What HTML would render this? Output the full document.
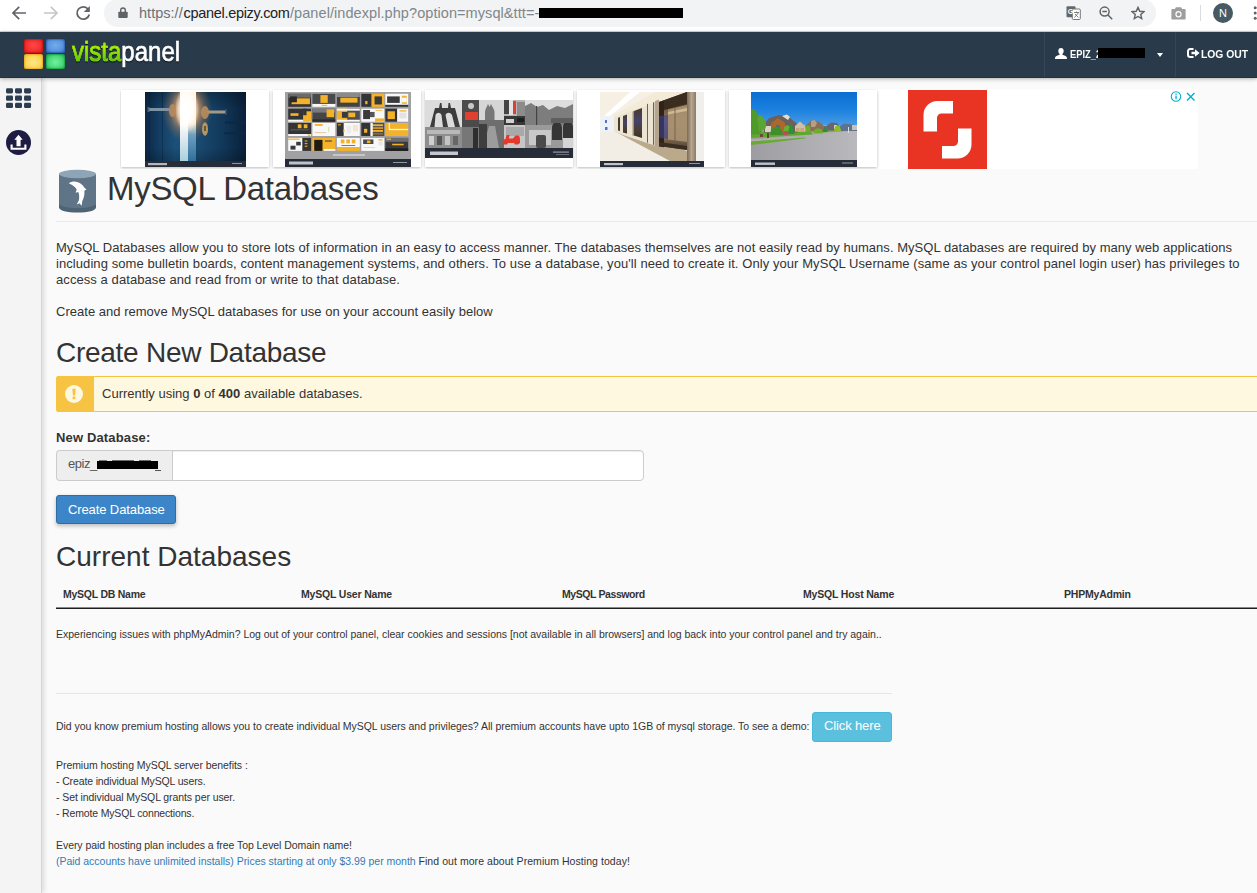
<!DOCTYPE html>
<html>
<head>
<meta charset="utf-8">
<title>MySQL Databases</title>
<style>
html,body{margin:0;padding:0;}
body{width:1257px;height:893px;overflow:hidden;position:relative;background:#fafafa;font-family:"Liberation Sans",sans-serif;color:#333;}
.abs{position:absolute;white-space:nowrap;}
/* browser chrome */
#chrome{position:absolute;left:0;top:0;width:1257px;height:32px;background:#fff;}
#pill{position:absolute;left:104px;top:-1px;width:1052px;height:28px;border-radius:14px;background:#f1f3f4;}
.url{top:5px;font-size:14.5px;line-height:17px;color:#80868b;}
#url1{left:139px;color:#6c7176;}#url2{left:183.500px;}#url3{left:290px;}
#url b{font-weight:normal;color:#202124;}
#redact1{position:absolute;left:539px;top:8px;width:144px;height:10px;background:#000;}
/* navbar */
#nav{position:absolute;left:0;top:32px;width:1257px;height:46px;box-sizing:border-box;background:#293a4a;border-bottom:1px solid #223140;box-shadow:0 1px 4px rgba(0,0,0,.3), 0 -1px 0 rgba(41,58,74,.2);}
#navin{position:absolute;left:0;top:-1px;}
/* sidebar */
#side{position:absolute;left:0;top:78px;width:42px;height:815px;box-sizing:border-box;background:#f4f4f4;border-right:1px solid #d6d6d6;box-shadow:2px 0 5px rgba(0,0,0,.13);}
/* content */
h1,h2,p{margin:0;padding:0;font-weight:normal;}

.t{position:absolute;white-space:nowrap;left:56px;}
#h1{left:107px;top:167px;font-size:33px;line-height:44px;color:#333;}
#hr1{position:absolute;left:56px;top:221px;width:1201px;height:1px;background:#eaeaea;}
.p{font-size:13px;line-height:16px;color:#333;}
#p1{top:240px;} #p2{top:256px;} #p3{top:272px;} #p4{top:304px;}
.h2{font-size:28px;line-height:36px;color:#333;}
#h2a{top:335px;} #h2b{top:539px;}
#alert{position:absolute;left:56px;top:376px;width:1210px;height:34px;background:#fef8e1;border:1px solid #f6c342;border-left:none;box-sizing:content-box;border-radius:3px 0 0 3px;}
#alertico{position:absolute;left:56px;top:376px;width:38px;height:36px;background:#f6c342;border-radius:3px 0 0 3px;}
#alerttxt{left:102px;top:386px;font-size:13px;line-height:16px;}
#lbl{top:430px;font-size:13px;line-height:16px;font-weight:bold;}
#addon{position:absolute;left:56px;top:450px;width:117px;height:31px;box-sizing:border-box;border:1px solid #ccc;border-right:none;border-radius:4px 0 0 4px;background:#eee;}
#input{position:absolute;left:172px;top:450px;width:472px;height:31px;box-sizing:border-box;border:1px solid #ccc;border-radius:0 4px 4px 0;background:#fff;box-shadow:inset 0 1px 1px rgba(0,0,0,.075);}
#epiz{left:68px;top:456px;font-size:13px;line-height:16px;color:#555;}
#redact2{position:absolute;left:97px;top:461px;width:61px;height:8px;background:#000;}
#btn1{position:absolute;left:56px;top:495px;width:120px;height:29px;box-sizing:border-box;border:1px solid #2e6da4;border-radius:3px;background:#3d85c9;box-shadow:0 2px 4px rgba(0,0,0,.26);}
#btn1t{left:68px;top:502px;font-size:13px;line-height:16px;color:#fff;}
.th{font-size:10.5px;line-height:14px;font-weight:bold;color:#333;top:587px;}
#thline{position:absolute;left:56px;top:607px;width:1201px;height:2px;background:linear-gradient(#8a8a8a 50%,#1f1f1f 50%);}
.s{font-size:10.5px;line-height:14px;color:#333;}
#hr2{position:absolute;left:56px;top:693px;width:836px;height:1px;background:#e6e6e6;}
#btn2{position:absolute;left:812px;top:712px;width:80px;height:30px;box-sizing:border-box;border:1px solid #46b8da;border-radius:3px;background:#5bc0de;}
#btn2t{left:824px;top:718px;font-size:13px;line-height:16px;color:#fff;}
.lnk{color:#337ab7;}

/* nav contents */
.sq{position:absolute;width:19px;height:14px;border-radius:2.5px;}
#sqr{left:24px;top:8px;box-shadow:inset 0 0 1.500px .5px #b41010;background:radial-gradient(ellipse at 50% 45%,#ff4848 0%,#f53030 55%,#d61a1a 100%);}
#sqb{left:45.5px;top:8px;box-shadow:inset 0 0 1.500px .5px #2052a0;background:radial-gradient(ellipse at 50% 45%,#74abec 0%,#5a96e0 55%,#2f68be 100%);}
#sqy{left:24px;top:23px;box-shadow:inset 0 0 1.500px .5px #dc9c10;height:14.500px;background:radial-gradient(ellipse at 50% 55%,#ffe684 0%,#fdd75c 55%,#f0b428 100%);}
#sqg{left:45.5px;top:23px;box-shadow:inset 0 0 1.500px .5px #0e9036;height:14.500px;background:radial-gradient(ellipse at 50% 55%,#74f0a0 0%,#48d878 55%,#1aa84a 100%);}
#logo{left:72px;top:6.600px;font-size:24px;line-height:30px;color:#fff;-webkit-text-stroke:0.6px #fff;transform:scaleY(1.13);transform-origin:0 22.900px;filter:drop-shadow(0 1px 0.6px rgba(0,0,0,.55));}
#logo span{-webkit-text-stroke:0.6px #86dc08;background:linear-gradient(#b4f400 35%,#58c800 80%);-webkit-background-clip:text;background-clip:text;color:transparent;}
.nsep{position:absolute;top:1px;width:1px;height:45px;background:#33465a;}
#user{left:1069.5px;top:16px;font-size:11.5px;line-height:14px;font-weight:bold;color:#fff;transform:scaleX(.81);transform-origin:0 0;}
#redact3{position:absolute;left:1098px;top:17px;width:47px;height:10px;background:#000;}
#caret{position:absolute;left:1157px;top:22px;width:0;height:0;border-left:3.5px solid transparent;border-right:3.5px solid transparent;border-top:4px solid #fff;}
#logout{left:1201px;top:16px;font-size:11.5px;line-height:14px;font-weight:bold;color:#fff;transform:scaleX(.9);transform-origin:0 0;}

/* sidebar icons */
.gc{position:absolute;width:7px;height:5.200px;border-radius:1.500px;background:#2b3d4f;}
#upl{position:absolute;left:6px;top:52px;width:25px;height:25px;border-radius:50%;background:#1e1c43;}
/* chrome icons */
.ci{position:absolute;}
#avatar{position:absolute;left:1213px;top:3px;width:20px;height:20px;border-radius:50%;background:#455a64;color:#fff;font-size:11px;line-height:20px;text-align:center;}
#cdiv{position:absolute;left:1200px;top:5px;width:1px;height:16px;background:#dadce0;}

/* ad */
#ad{position:absolute;left:120px;top:89px;width:1078px;height:80px;background:#fff;overflow:hidden;}
.card{position:absolute;top:1px;height:77px;width:148px;background:#fff;box-shadow:0 1px 3px rgba(0,0,0,.28);overflow:hidden;}
.img{position:absolute;top:2px;height:75px;overflow:hidden;}
.bar{position:absolute;left:0;bottom:0;width:100%;height:6px;background:#252b37;}
#sstk{position:absolute;left:788px;top:1px;width:79px;height:79px;background:#e93423;}
/* db icon */
#dbi{position:absolute;left:58px;top:169px;}
/* alert icon */
#alertc{position:absolute;left:65px;top:385px;width:18px;height:18px;border-radius:50%;background:#fef8e1;}
/*FIT*/
#h1{letter-spacing:-0.292px;}
#p1{letter-spacing:0.042px;}
#p2{letter-spacing:0.071px;}
#p3{letter-spacing:0.076px;}
#p4{letter-spacing:0.021px;}
#h2a{letter-spacing:-0.269px;}
#alerttxt{letter-spacing:0.009px;}
#lbl{letter-spacing:0.145px;}
#epiz{letter-spacing:-0.462px;}
#btn1t{letter-spacing:-0.109px;}
#h2b{letter-spacing:0.011px;}
#th1{letter-spacing:-0.247px;}
#th2{letter-spacing:-0.184px;}
#th3{letter-spacing:-0.409px;}
#th4{letter-spacing:-0.176px;}
#th5{letter-spacing:-0.205px;}
#s1{letter-spacing:-0.014px;}
#s2{letter-spacing:-0.034px;}
#btn2t{letter-spacing:-0.126px;}
#s3{letter-spacing:-0.056px;}
#s4{letter-spacing:-0.132px;}
#s5{letter-spacing:-0.085px;}
#s6{letter-spacing:-0.162px;}
#s7{letter-spacing:-0.054px;}
#url1{letter-spacing:0.022px;}
#url2{letter-spacing:-0.300px;}
#url3{letter-spacing:0.072px;}
#s8a{letter-spacing:-0.021px;}
#s8b{letter-spacing:0.059px;}
/*ENDFIT*/
</style>
</head>
<body>

<div id="main">
<div id="ad">
  <div class="card" style="left:1px">
    <svg class="img" style="left:24px;width:101px" width="101" height="75" viewBox="0 0 101 75">
      <defs>
        <linearGradient id="d1" x1="0" x2="1" y1="0" y2="0"><stop offset="0" stop-color="#0c2744"/><stop offset=".12" stop-color="#123a5e"/><stop offset=".3" stop-color="#1c5079"/><stop offset=".55" stop-color="#19496f"/><stop offset=".8" stop-color="#103556"/><stop offset="1" stop-color="#0a2039"/></linearGradient>
        <linearGradient id="d2" x1="0" x2="0" y1="0" y2="1"><stop offset="0" stop-color="#fff8e6"/><stop offset=".45" stop-color="#fffdf6"/><stop offset=".62" stop-color="#e6eef2"/><stop offset="1" stop-color="#a9d0de"/></linearGradient>
        <radialGradient id="d3" cx=".5" cy=".5" r=".5"><stop offset="0" stop-color="#ffe2b0" stop-opacity="1"/><stop offset=".4" stop-color="#f3b070" stop-opacity=".8"/><stop offset=".7" stop-color="#c98450" stop-opacity=".35"/><stop offset="1" stop-color="#a06a40" stop-opacity="0"/></radialGradient><linearGradient id="d5" x1="0" x2="0" y1="0" y2="1"><stop offset="0" stop-color="#fff3da"/><stop offset=".45" stop-color="#ffeccc"/><stop offset=".62" stop-color="#6f9fc0"/><stop offset="1" stop-color="#2f6f9c"/></linearGradient><radialGradient id="d6" cx=".5" cy=".5" r=".5"><stop offset="0" stop-color="#fff" stop-opacity="1"/><stop offset=".5" stop-color="#fff" stop-opacity=".9"/><stop offset="1" stop-color="#fff" stop-opacity="0"/></radialGradient>
        <linearGradient id="d4" x1="0" x2="0" y1="0" y2="1"><stop offset="0" stop-color="#000" stop-opacity=".25"/><stop offset=".25" stop-color="#000" stop-opacity="0"/><stop offset=".8" stop-color="#000" stop-opacity="0"/><stop offset="1" stop-color="#000" stop-opacity=".2"/></linearGradient>
      </defs>
      <rect width="101" height="75" fill="url(#d1)"/>
      <rect x="4" width=".8" height="69" fill="#0a2440" opacity=".6"/><rect x="17" width=".8" height="69" fill="#0a2440" opacity=".6"/><rect x="50" width="1" height="69" fill="#0c2a48" opacity=".7"/>
      <rect x="80" y="29" width="21" height="3" fill="#0b2845" opacity=".7"/><rect x="79" y="40" width="22" height="2.500" fill="#0b2845" opacity=".7"/>
      <rect width="101" height="69" fill="url(#d4)"/><ellipse cx="42" cy="18" rx="25" ry="33" fill="url(#d3)"/>
      <rect x="42" y="0" width="9" height="69" fill="url(#d5)"/>
      <rect x="35" y="0" width="8" height="69" fill="url(#d2)"/>
      <ellipse cx="42" cy="17" rx="12" ry="24" fill="url(#d6)"/>
      <rect x="3" y="16" width="22" height="3" rx="1.500" fill="#7d93a4"/><rect x="2.500" y="15" width="2" height="5" fill="#51677a"/>
      <ellipse cx="27.500" cy="18.500" rx="3.600" ry="6.500" fill="#b98a5c" opacity=".9"/>
      <rect x="62" y="18.500" width="19" height="3" rx="1.500" fill="#a39a86"/><rect x="80" y="17.500" width="1.500" height="5" fill="#4d5f6e"/>
      <ellipse cx="60" cy="20.500" rx="4" ry="6.500" fill="#b98d5a" opacity=".9"/>
      <ellipse cx="60" cy="37" rx="3" ry="6.800" fill="#b5975f"/><rect x="59.400" y="34" width="1.200" height="5" fill="#3a2d18"/>
      <rect y="69" width="101" height="6" fill="#262c38"/><rect x="3" y="71" width="19" height="2.200" fill="#d8dade" opacity=".8"/><rect x="87" y="71" width="10" height="1" fill="#d8dade" opacity=".6"/>
    </svg>
  </div>
  <div class="card" style="left:153px">
    <svg class="img" style="left:12px;width:126px" width="126" height="75" viewBox="0 0 126 75">
      <rect width="126" height="75" fill="#a1a1a4"/>
      <g id="gridcells"><rect x="3.20" y="1.80" width="22.90" height="13.00" fill="#343436"/><rect x="3.20" y="1.80" width="22.90" height="3.90" fill="#6a6a6c"/><rect x="6.63" y="6.35" width="18.32" height="5.85" fill="#f3b229"/><rect x="5.03" y="4.40" width="6.87" height="5.85" fill="#2a2a2c"/><rect x="27.40" y="1.80" width="22.90" height="10.14" fill="#4a4a4c"/><rect x="27.40" y="11.94" width="22.90" height="2.86" fill="#f8f8f8"/><rect x="35.41" y="3.10" width="7.33" height="7.80" fill="#f3b229"/><rect x="36.56" y="12.85" width="5.72" height="1.04" fill="#f3b229"/><rect x="51.90" y="1.80" width="22.90" height="13.00" fill="#424244"/><rect x="51.90" y="1.80" width="22.90" height="3.25" fill="#8a8a8c"/><rect x="55.34" y="5.70" width="17.17" height="4.94" fill="#f3b229"/><rect x="76.30" y="1.80" width="10.30" height="13.00" fill="#343436"/><rect x="86.60" y="1.80" width="12.60" height="13.00" fill="#f3b229"/><rect x="89.58" y="4.40" width="7.33" height="8.06" fill="#3a3a3c"/><rect x="80.19" y="8.95" width="2.29" height="3.25" fill="#f3b229"/><rect x="100.30" y="1.80" width="22.90" height="11.05" fill="#f8f8f8"/><rect x="100.30" y="12.85" width="22.90" height="1.95" fill="#343436"/><rect x="102.13" y="4.40" width="12.60" height="6.50" fill="#3a3a3c"/><rect x="116.79" y="3.75" width="5.04" height="8.06" fill="#f3b229"/><rect x="116.79" y="5.70" width="5.04" height="4.55" fill="#f8f8f8"/><rect x="3.20" y="16.70" width="22.90" height="11.05" fill="#343436"/><rect x="3.20" y="27.75" width="22.90" height="1.95" fill="#f8f8f8"/><rect x="5.49" y="21.25" width="8.01" height="2.60" fill="#f3b229"/><rect x="18.09" y="19.30" width="8.01" height="10.40" fill="#f3b229"/><rect x="18.09" y="16.70" width="3.43" height="6.50" fill="#343436"/><rect x="27.40" y="16.70" width="22.90" height="13.00" fill="#454547"/><rect x="27.40" y="16.70" width="22.90" height="3.90" fill="#7a7a7c"/><rect x="41.60" y="17.35" width="7.56" height="7.80" fill="#f3b229"/><rect x="27.40" y="27.36" width="22.90" height="2.34" fill="#2c2c2e"/><rect x="51.90" y="16.70" width="10.30" height="13.00" fill="#f3b229"/><rect x="62.20" y="16.70" width="12.60" height="13.00" fill="#505052"/><rect x="51.90" y="16.70" width="22.90" height="1.95" fill="#f8f8f8"/><rect x="51.90" y="27.75" width="22.90" height="1.95" fill="#f8f8f8"/><rect x="56.94" y="19.95" width="5.72" height="5.85" fill="#3a3a3c"/><rect x="63.35" y="20.60" width="6.87" height="4.55" fill="#f3b229"/><rect x="76.30" y="16.70" width="22.90" height="13.00" fill="#f8f8f8"/><rect x="78.13" y="18.00" width="6.87" height="9.10" fill="#3a3a3c"/><rect x="85.00" y="19.95" width="4.58" height="5.20" fill="#555"/><rect x="90.04" y="26.45" width="9.16" height="3.25" fill="#f3b229"/><rect x="90.50" y="18.00" width="6.87" height="0.78" fill="#f3b229"/><rect x="100.30" y="16.70" width="11.91" height="13.00" fill="#343436"/><rect x="112.21" y="16.70" width="10.99" height="13.00" fill="#f8f8f8"/><rect x="102.59" y="19.30" width="7.33" height="7.80" fill="#f3b229"/><rect x="114.50" y="18.26" width="6.87" height="1.30" fill="#f3b229"/><rect x="114.50" y="20.60" width="6.87" height="5.85" fill="#e3e3e3"/><rect x="3.20" y="31.00" width="22.90" height="11.05" fill="#343436"/><rect x="3.20" y="42.05" width="22.90" height="1.95" fill="#f8f8f8"/><rect x="12.82" y="32.30" width="3.66" height="3.90" fill="#f3b229"/><rect x="18.77" y="32.30" width="3.66" height="3.90" fill="#f3b229"/><rect x="5.49" y="37.50" width="18.32" height="0.78" fill="#6a6a6c"/><rect x="22.66" y="42.44" width="2.75" height="1.30" fill="#f3b229"/><rect x="27.40" y="31.00" width="22.90" height="13.00" fill="#f8f8f8"/><rect x="29.69" y="32.04" width="8.01" height="1.82" fill="#f3b229"/><rect x="29.69" y="40.10" width="11.45" height="1.04" fill="#e8c7a0"/><rect x="42.97" y="34.90" width="1.37" height="5.20" fill="#d8e8b0"/><rect x="51.90" y="31.00" width="6.87" height="13.00" fill="#343436"/><rect x="58.77" y="31.00" width="16.03" height="13.00" fill="#f8f8f8"/><rect x="53.05" y="32.30" width="2.75" height="1.04" fill="#f3b229"/><rect x="61.52" y="33.60" width="4.58" height="7.80" fill="#ececec"/><rect x="67.93" y="32.95" width="5.04" height="6.50" fill="#f4e4d0"/><rect x="58.31" y="37.50" width="1.15" height="2.60" fill="#f3b229"/><rect x="76.30" y="31.00" width="9.16" height="13.00" fill="#343436"/><rect x="85.46" y="31.00" width="13.74" height="13.00" fill="#4a4a4c"/><rect x="79.05" y="36.85" width="3.21" height="3.90" fill="#f3b229"/><rect x="86.60" y="32.30" width="11.45" height="1.82" fill="#f3b229"/><rect x="86.60" y="35.16" width="11.45" height="1.82" fill="#c9962a"/><rect x="86.60" y="38.02" width="11.45" height="1.82" fill="#f3b229"/><rect x="86.60" y="40.88" width="11.45" height="1.82" fill="#8a6a2a"/><rect x="85.46" y="31.00" width="2.29" height="13.00" fill="#f8f8f8"/><rect x="100.30" y="31.00" width="22.90" height="13.00" fill="#f3b229"/><rect x="103.73" y="36.85" width="19.46" height="1.30" fill="#f8f8f8"/><rect x="103.73" y="31.00" width="1.15" height="6.50" fill="#f8f8f8"/><rect x="3.20" y="45.90" width="14.20" height="13.00" fill="#f8f8f8"/><rect x="17.40" y="45.90" width="8.70" height="13.00" fill="#343436"/><rect x="3.20" y="46.55" width="11.45" height="1.30" fill="#f3b229"/><rect x="11.21" y="49.80" width="4.58" height="3.64" fill="#3a3a3c"/><rect x="5.49" y="53.70" width="5.04" height="3.90" fill="#3a3a3c"/><rect x="19.69" y="48.50" width="2.75" height="1.04" fill="#f3b229"/><rect x="19.69" y="51.10" width="2.75" height="1.04" fill="#f3b229"/><rect x="19.69" y="53.70" width="2.75" height="1.04" fill="#f3b229"/><rect x="27.40" y="45.90" width="22.90" height="13.00" fill="#f3b229"/><rect x="29.23" y="47.85" width="8.24" height="11.05" fill="#1e1a14"/><rect x="38.85" y="56.95" width="11.45" height="1.95" fill="#f8f8f8"/><rect x="39.99" y="48.50" width="6.87" height="1.04" fill="#3a3a3c"/><rect x="51.90" y="45.90" width="22.90" height="9.36" fill="#f8f8f8"/><rect x="51.90" y="55.26" width="22.90" height="3.64" fill="#f3b229"/><rect x="55.79" y="47.46" width="3.66" height="3.90" fill="#f3b229"/><rect x="61.29" y="47.46" width="3.66" height="3.90" fill="#f3b229"/><rect x="66.78" y="47.46" width="3.66" height="3.90" fill="#f3b229"/><rect x="56.48" y="53.05" width="13.74" height="0.78" fill="#555"/><rect x="76.30" y="45.90" width="22.90" height="13.00" fill="#f8f8f8"/><rect x="78.13" y="47.46" width="10.30" height="4.55" fill="#4a4a4c"/><rect x="82.02" y="48.50" width="3.43" height="2.60" fill="#f3b229"/><rect x="93.47" y="47.20" width="4.12" height="1.30" fill="#f3b229"/><rect x="93.47" y="49.54" width="4.12" height="3.90" fill="#e6e6e6"/><rect x="78.59" y="55.00" width="11.45" height="0.65" fill="#c8c8c8"/><rect x="100.30" y="45.90" width="22.90" height="13.00" fill="#3a3a3c"/><rect x="100.30" y="45.90" width="22.90" height="3.90" fill="#6c6c6e"/><rect x="101.44" y="46.55" width="4.58" height="1.30" fill="#f3b229"/><rect x="107.17" y="51.75" width="11.45" height="1.56" fill="#f3b229"/><rect x="100.30" y="56.30" width="22.90" height="2.60" fill="#1e1e20"/></g>
      <rect x="48" y="62" width="32" height="2" fill="#c6c6c9"/>
      <rect y="67" width="126" height="8" fill="#262c38"/><rect x="4" y="69.500" width="24" height="3" fill="#dcdde0" opacity=".85"/><rect x="108" y="70" width="14" height="1" fill="#dcdde0" opacity=".6"/>
    </svg>
  </div>
  <div class="card" style="left:305px">
    <svg class="img" style="left:0;top:10px;width:148px;height:58px" width="148" height="58" viewBox="0 0 148 58">
      <rect width="148" height="58" fill="#8d8d8d"/>
      <rect x="0" y="0" width="37" height="27" fill="#dcdcdc"/>
      <path d="M5 27L10 8h4l1-5h1.500l.5 5h6l.5-5h1.500l1 5h4l5 19h-5l-3-12c-2-3-5-3-6.500 0L23 27h-5l-1.500-12c-1.500-3-4.500-3-6 0L9.500 27z" fill="#3d3d3d"/>
      <rect x="0" y="27" width="37" height="21" fill="#8e8e8e"/><rect x="2" y="30" width="33" height="4" fill="#b9b9b9"/><rect x="4" y="36" width="5" height="9" fill="#d0d0d0"/><rect x="12" y="36" width="5" height="9" fill="#555"/><rect x="20" y="36" width="5" height="9" fill="#c4c4c4"/><rect x="28" y="36" width="5" height="9" fill="#666"/>
      <rect x="37" y="0" width="17" height="48" fill="#4b4b4b"/><circle cx="46" cy="6" r="3" fill="#c8c8c8"/><rect x="40" y="12" width="13" height="8" fill="#e0402f"/><rect x="37" y="27" width="17" height="21" fill="#777"/><rect x="48" y="28" width="5" height="20" fill="#2f2f2f"/>
      <rect x="54" y="0" width="25" height="20" fill="#d6d6d6"/><path d="M60 20v-8c0-3 2-5 3-8 1 2 1.500 3 1.500 3s.5-1 1.500-3c1 3 3.500 5 3.500 8v8z" fill="#777"/><rect x="54" y="20" width="25" height="28" fill="#6e6e6e"/><path d="M58 48l6-22 6 0 4 22z" fill="#9c9c9c"/><rect x="54" y="24" width="8" height="24" fill="#3e3e3e"/>
      <rect x="79" y="0" width="21" height="16" fill="#b5b5b5"/><rect x="79" y="0" width="5" height="14" fill="#444"/><rect x="84" y="0" width="4" height="15" fill="#e4e4e4"/><rect x="88" y="1" width="3" height="13" fill="#e0402f"/><rect x="92" y="2" width="8" height="14" fill="#8c8c8c"/>
      <rect x="79" y="16" width="21" height="9" fill="#383838"/><rect x="81" y="19" width="8" height="4" fill="#d0d0d0"/><rect x="92" y="18" width="7" height="4" fill="#1e1e1e"/>
      <rect x="79" y="25" width="22" height="23" fill="#c6c6c6"/><rect x="81" y="27" width="18" height="9" fill="#a9a9a9"/><path d="M77.500 44c0-3 1.500-5 3-5l1-4h3l-.5 3.500h4l2.500-3h2.500c1.500 0 2 2 2 4.500v3l-2 1.500h-3l-1-1.500h-6l-1 1.500h-3z" fill="#e53a2b"/>
      <rect x="100" y="0" width="48" height="10" fill="#dedede"/><path d="M100 25V6l6-3 6 4 6-2 6 5 8-4 8 2 8-4v21z" fill="#7d7d7d"/><rect x="111" y="6" width="1.200" height="20" fill="#444"/>
      <rect x="100" y="25" width="48" height="23" fill="#9a9a9a"/><rect x="104" y="30" width="22" height="15" fill="#c9c9c9"/><rect x="111" y="35" width="10" height="13" rx="2" fill="#4a4a4a"/><path d="M127 40V28c0-8 10-8 10 0v12zM138 38V27c0-7 10-7 10 0v11z" fill="#353535"/><rect x="126" y="18" width="22" height="5" fill="#5e5e5e"/><rect x="138" y="38" width="10" height="10" fill="#d4d4d4"/>
      <rect y="48" width="148" height="10" fill="#262c38"/><rect x="5" y="51.500" width="28" height="3.500" fill="#e2e3e6" opacity=".85"/><rect x="128" y="51.500" width="16" height="1.200" fill="#e2e3e6" opacity=".6"/><rect x="131" y="54" width="13" height="1" fill="#e2e3e6" opacity=".35"/>
    </svg>
  </div>
  <div class="card" style="left:457px">
    <svg class="img" style="left:23px;width:104px" width="104" height="75" viewBox="0 0 104 75">
      <defs>
        <linearGradient id="e1" x1="0" x2="0" y1="0" y2="1"><stop offset="0" stop-color="#3d2f22"/><stop offset=".25" stop-color="#6a543c"/><stop offset=".5" stop-color="#93785a"/><stop offset=".8" stop-color="#7d664c"/><stop offset="1" stop-color="#4d3f30"/></linearGradient>
        <linearGradient id="e2" x1="0" x2="1" y1="0" y2="0"><stop offset="0" stop-color="#7a6a58"/><stop offset=".5" stop-color="#b8a68e"/><stop offset="1" stop-color="#8c7a66"/></linearGradient>
        <linearGradient id="e3" x1="0" x2="0" y1="0" y2="1"><stop offset="0" stop-color="#4b3a26"/><stop offset=".4" stop-color="#45426c"/><stop offset=".8" stop-color="#4a3c30"/><stop offset="1" stop-color="#3b3026"/></linearGradient>
      </defs>
      <rect width="104" height="69" fill="#f1ece2"/>
      <path d="M0 0h56L12 24H0z" fill="#f6f0e4"/><path d="M30 0h10L10 24H4z" fill="#ffffff"/>
      <path d="M56 0h48v6L20 25 12 24z" fill="#f3ead8"/>
      <rect x="0" y="24" width="14" height="16" fill="#edf1f8"/><rect x="5" y="28" width="2" height="3" fill="#5672c4"/><rect x="5" y="35" width="2.500" height="3" fill="#5672c4"/>
      <path d="M0 40h16l88 29H0z" fill="#f2eee6"/>
      <path d="M14 39h6l84 25v5H70z" fill="#bba98c"/>
      <path d="M14 25l45-16v46L14 40z" fill="#ece4d3"/>
      <path d="M18 26l2-1v14l-2-.5z" fill="#4a3c2c"/><path d="M23 24l4-1.500v19l-4-1z" fill="url(#e3)"/>
      <path d="M34 19l8-3v30l-8-2.500z" fill="url(#e3)"/><path d="M32.500 19.500l1.500-.5v25l-1.500-.4z" fill="#a8926e"/>
      <path d="M47 12l1-.3v39l-1-.3zM53 10.500l1.200-.4v43l-1.200-.4z" fill="#6d6252"/>
      <path d="M55 9l4-1.500v48l-4-1.500z" fill="#b5a58e"/>
      <path d="M59 10L87 0v58l-28-4z" fill="url(#e1)"/>
      <path d="M59 10l5-1.800v47l-5-.8z" fill="#2e241a"/><path d="M59 24l10-1v24l-10-1.500z" fill="#3b4196" opacity=".6"/><path d="M64 8.200L87 0v12l-23 6z" fill="#3a2c1e"/>
      <path d="M68 17.500l19-4.500v37l-19-2.500z" fill="#aa9272" opacity=".9"/><path d="M68 20l19-4v3l-19 3.500z" fill="#d8c49c" opacity=".8"/><path d="M75 15v34" stroke="#6d5a44" stroke-width=".8"/>
      <path d="M59 50l28 4v4l-28-4z" fill="#3a2e22"/>
      <rect x="87" y="0" width="9" height="69" fill="url(#e2)"/>
      <rect x="96" y="0" width="8" height="69" fill="#f1efec"/>
      <rect y="69" width="104" height="6" fill="#262c38"/><rect x="4" y="71" width="19" height="2.200" fill="#dcdde0" opacity=".85"/><rect x="89" y="71" width="11" height="1" fill="#dcdde0" opacity=".6"/>
    </svg>
  </div>
  <div class="card" style="left:609px">
    <svg class="img" style="left:22px;width:106px" width="106" height="75" viewBox="0 0 106 75">
      <defs>
        <linearGradient id="h1g" x1="0" x2="0" y1="0" y2="1"><stop offset="0" stop-color="#0a6ed2"/><stop offset=".5" stop-color="#1a80de"/><stop offset="1" stop-color="#4a9ce6"/></linearGradient>
        <linearGradient id="h2g" x1="0" x2="1" y1="0" y2="0"><stop offset="0" stop-color="#9d9da1"/><stop offset=".5" stop-color="#adadb1"/><stop offset="1" stop-color="#b9b9bd"/></linearGradient>
      </defs>
      <rect width="106" height="34" fill="url(#h1g)"/>
      <rect y="33" width="106" height="36" fill="url(#h2g)"/>
      <path d="M0 46l62-3.500-2-3H0z" fill="#62a52f"/><path d="M0 47.500l45-3v1.200L0 49.500z" fill="#b4b0a4"/><path d="M0 49.500l54-4 1 .8L0 53z" fill="#66ab32"/>
      <path d="M66 41l40-2.500v-4H66z" fill="#7db040"/>
      <path d="M13 32l5-6 10-3 9 1.500 10 8v8H13z" fill="#6b605b"/><path d="M20 31l7-5 7 5v9H20z" fill="#a9692b"/><rect x="25" y="33" width="4" height="7" fill="#4f6f80"/><rect x="14" y="34" width="6" height="6" fill="#d9d4c6"/>
      <path d="M31 24l5-1.500 3 2.500-2 3z" fill="#e4ded2"/>
      <path d="M44 34l5-4.500 5 4.500v5.500H44z" fill="#cfc0a6"/><rect x="45" y="36" width="3.500" height="3.500" fill="#c9a47c"/><rect x="49.500" y="36" width="3.500" height="3.500" fill="#c9a47c"/>
      <path d="M54 34l6-5.500 8 1 5 4.500 4 .5v5H56z" fill="#8a6f58"/><path d="M60 29l3.500-1 2.500 3-2 4h-4z" fill="#b7a082"/>
      <path d="M75 34l5-3.500 6 .5 3 3.500v4H76z" fill="#6a6470"/><rect x="83" y="33" width="3" height="4" fill="#d8cdb8"/>
      <path d="M88 34l6-2.500 8 1 4 1.500v5H90z" fill="#5c7390"/><rect x="101" y="33" width="5" height="5" fill="#c8c2b6"/>
      <path d="M0 18c3-3 6 1 6.500 6 3 1 4.500 5 3.500 9 2 3 1 8-2 9.500H0z" fill="#4f9a28"/><path d="M6 26c2-4 6-3 7 1 2 2 3 7 1 10l-6 3z" fill="#5aa533"/>
      <path d="M20 38c2-4 8-4 11 0l1 5H19z" fill="#3f8f2c"/><path d="M33 36c1-3 4-4 6-1l1 6h-8z" fill="#64b12f"/><path d="M40 30l3.500 12h-7z" fill="#2f8f3a"/><ellipse cx="34.500" cy="41" rx="3" ry="2" fill="#c04a5a"/>
      <path d="M55 35c1-2 3-2 4 0l.500 4.500h-5zM63 38c2-2 6-2 8 0l1 3.500H62z" fill="#6fae2c"/><path d="M74 33l2.500 7h-5z" fill="#2d8a48"/><path d="M84 35c1-2 4-2 5 0l1 4h-7z" fill="#8fbc2e"/><rect x="97" y="35" width="1" height="6" fill="#ddd"/>
      <rect x="9" y="42" width="3" height="3" fill="#6b4a3a"/><rect x="16" y="41" width="2" height="5" fill="#5b4538"/>
      <rect y="68" width="106" height="7" fill="#262c38"/><rect x="4" y="70.500" width="20" height="2.400" fill="#dcdde0" opacity=".85"/><rect x="91" y="70.500" width="11" height="1" fill="#dcdde0" opacity=".6"/>
    </svg>
  </div>
  <div id="sstk"><svg width="79" height="79" viewBox="0 0 79 79"><path fill="#fff" d="M45 11v12.500H33.500a4.500 4.500 0 0 0-4.500 4.500V41.500H15.500V25A14 14 0 0 1 29.500 11z"/><path fill="#fff" d="M34 68.500V56h11.500a4.500 4.500 0 0 0 4.500-4.500V38.500h13.500V54.500A14 14 0 0 1 49.500 68.500z"/></svg></div>
  <svg style="position:absolute;left:1050px;top:1px" width="26" height="13" viewBox="0 0 26 13"><circle cx="6" cy="6.500" r="4.700" fill="none" stroke="#00aecd" stroke-width="1.100"/><rect x="5.400" y="5.600" width="1.300" height="3.600" fill="#00aecd"/><rect x="5.400" y="3.500" width="1.300" height="1.300" fill="#00aecd"/><path d="M17 3l7.500 7.500M24.500 3L17 10.500" stroke="#00aecd" stroke-width="1.400" fill="none"/></svg>
</div>
<svg id="dbi" width="39" height="44" viewBox="0 0 39 44"><path fill="#4e6373" d="M1 36v2.500C1 41.500 9 43.500 19.500 43.500S38 41.500 38 38.500V36z"/><path fill="#5f7587" d="M1 5v32.500C1 40 9 41.500 19.500 41.500S38 40 38 37.500V5z"/><path fill="#4e6373" d="M1 34.500v3C1 40 9 42 19.500 42S38 40 38 37.500v-3C38 37 30 39 19.500 39S1 37 1 34.500z"/><ellipse cx="19.500" cy="5" rx="18.500" ry="4.200" fill="#8ea5b7"/><path fill="#fff" d="M10.800 14.200C13 12.500 17 12 20 13.200C23 14.300 25 16.300 26 18.300L28.400 20.600L26.300 21.800C26.800 25 26 29 24.300 32L23.700 36.700L21.400 34.200L18.700 35.600L20.800 31.500C21.500 28.500 21.300 25.500 20.300 23L17.600 23.700L18.700 20.500C17.500 18 15 16 10.800 14.200z"/></svg>

  <div id="h1" class="t">MySQL Databases</div>
  <div id="hr1"></div>
  <div id="p1" class="t p">MySQL Databases allow you to store lots of information in an easy to access manner. The databases themselves are not easily read by humans. MySQL databases are required by many web applications</div>
  <div id="p2" class="t p">including some bulletin boards, content management systems, and others. To use a database, you'll need to create it. Only your MySQL Username (same as your control panel login user) has privileges to</div>
  <div id="p3" class="t p">access a database and read from or write to that database.</div>
  <div id="p4" class="t p">Create and remove MySQL databases for use on your account easily below</div>
  <div id="h2a" class="t h2">Create New Database</div>
  <div id="alert"></div>
  <div id="alertico"></div>
  <div id="alertc"><svg width="18" height="18" viewBox="0 0 18 18"><path fill="#f6c342" d="M7.300 3.700h3.400l-.6 6.900H7.900z"/><rect x="7.600" y="11.600" width="2.800" height="2.600" rx=".5" fill="#f6c342"/></svg></div>
  <div id="alerttxt" class="t">Currently using <b>0</b> of <b>400</b> available databases.</div>
  <div id="lbl" class="t">New Database:</div>
  <div id="addon"></div>
  <div id="input"></div>
  <div id="epiz" class="t">epiz_</div>
  <div id="redact2"></div>
  <div style="position:absolute;left:155px;top:470px;width:6px;height:1px;background:#555;"></div>
  <div style="position:absolute;left:99px;top:460px;width:8px;height:1px;background:#444;opacity:.7"></div><div style="position:absolute;left:112px;top:460px;width:22px;height:1px;background:#333;opacity:.7"></div><div style="position:absolute;left:139px;top:460px;width:12px;height:1px;background:#333;opacity:.7"></div>
  <div id="btn1"></div>
  <div id="btn1t" class="t">Create Database</div>
  <div id="h2b" class="t h2">Current Databases</div>
  <div id="th1" class="t th" style="left:63px">MySQL DB Name</div>
  <div id="th2" class="t th" style="left:301px">MySQL User Name</div>
  <div id="th3" class="t th" style="left:562px">MySQL Password</div>
  <div id="th4" class="t th" style="left:803px">MySQL Host Name</div>
  <div id="th5" class="t th" style="left:1064px">PHPMyAdmin</div>
  <div id="thline"></div>
  <div id="s1" class="t s" style="top:627px">Experiencing issues with phpMyAdmin? Log out of your control panel, clear cookies and sessions [not available in all browsers] and log back into your control panel and try again..</div>
  <div id="hr2"></div>
  <div id="s2" class="t s" style="top:719px">Did you know premium hosting allows you to create individual MySQL users and privileges? All premium accounts have upto 1GB of mysql storage. To see a demo:</div>
  <div id="btn2"></div>
  <div id="btn2t" class="t">Click here</div>
  <div id="s3" class="t s" style="top:758px">Premium hosting MySQL server benefits :</div>
  <div id="s4" class="t s" style="top:774px">- Create individual MySQL users.</div>
  <div id="s5" class="t s" style="top:790px">- Set individual MySQL grants per user.</div>
  <div id="s6" class="t s" style="top:806px">- Remote MySQL connections.</div>
  <div id="s7" class="t s" style="top:838px">Every paid hosting plan includes a free Top Level Domain name!</div>
  <div id="s8a" class="t s lnk" style="top:854px">(Paid accounts have unlimited installs) Prices starting at only $3.99 per month</div><div id="s8b" class="t s" style="top:854px;left:418.500px">Find out more about Premium Hosting today!</div>
</div>
<div id="side"><svg style="position:absolute;left:0;top:0" width="41" height="40" viewBox="0 0 41 40"><rect x="6" y="10.2" width="7" height="5.300" rx="1.400" fill="#2b3d4f"/><rect x="15" y="10.2" width="7" height="5.300" rx="1.400" fill="#2b3d4f"/><rect x="24.05" y="10.2" width="7" height="5.300" rx="1.400" fill="#2b3d4f"/><rect x="6" y="17.5" width="7" height="5.300" rx="1.400" fill="#2b3d4f"/><rect x="15" y="17.5" width="7" height="5.300" rx="1.400" fill="#2b3d4f"/><rect x="24.05" y="17.5" width="7" height="5.300" rx="1.400" fill="#2b3d4f"/><rect x="6" y="24.8" width="7" height="5.300" rx="1.400" fill="#2b3d4f"/><rect x="15" y="24.8" width="7" height="5.300" rx="1.400" fill="#2b3d4f"/><rect x="24.05" y="24.8" width="7" height="5.300" rx="1.400" fill="#2b3d4f"/></svg>
  <div id="upl"><svg width="25" height="25" viewBox="0 0 25 25"><path fill="#fff" d="M12.500 4.800L16.700 9.700H14.600V16.200H10.500V9.700H8.300z"/><path fill="none" stroke="#fff" stroke-width="2.100" d="M5.600 14.400v4.400h13.800v-4.400"/></svg></div>
</div>
<div id="chrome">
  <div id="pill"></div>
  <div id="url1" class="abs url">https://</div><div id="url2" class="abs url" style="color:#202124">cpanel.epizy.com</div><div id="url3" class="abs url">/panel/indexpl.php?option=mysql&amp;ttt=-</div>
  <div id="redact1"></div>
  <svg class="ci" style="left:11px;top:5px" width="16" height="16" viewBox="0 0 16 16"><path fill="none" stroke="#5f6368" stroke-width="1.700" d="M15 8H2.500M8.200 1.800L2 8l6.200 6.200"/></svg>
  <svg class="ci" style="left:43px;top:5px" width="16" height="16" viewBox="0 0 16 16"><path fill="none" stroke="#c4c7ca" stroke-width="1.700" d="M1 8h12.500M7.800 1.800L14 8l-6.200 6.200"/></svg>
  <svg class="ci" style="left:75px;top:5px" width="16" height="16" viewBox="0 0 16 16"><path fill="none" stroke="#5f6368" stroke-width="1.800" d="M13.200 4.200A6.200 6.200 0 1 0 14.300 9.500"/><path fill="#5f6368" d="M14.800 1v6h-6z"/></svg>
  <svg class="ci" style="left:118px;top:7px" width="10" height="12" viewBox="0 0 10 12"><path fill="#5f6368" d="M1.200 4.700h7.600c.5 0 .9.400.9.900v4.500c0 .5-.4.900-.9.900H1.200c-.5 0-.9-.4-.9-.9V5.600c0-.5.400-.9.900-.9z"/><path fill="none" stroke="#5f6368" stroke-width="1.400" d="M2.700 5V3.300a2.300 2.300 0 0 1 4.600 0V5"/></svg>
  <!-- translate -->
  <svg class="ci" style="left:1066px;top:6px" width="15" height="14" viewBox="0 0 15 14"><rect x="0.500" y="0.300" width="9" height="11" rx="1" fill="#63676c"/><rect x="6.300" y="3" width="8" height="10.500" rx="1" fill="#fff" stroke="#73777c" stroke-width="1"/><text x="1.800" y="8.300" font-family="Liberation Sans" font-size="7" font-weight="bold" fill="#fff">G</text><path d="M8 6.500h5M10.500 5.500v1.200M8.500 11.500l3.800-4.500M9 8l3.500 3.500" stroke="#757575" stroke-width=".9" fill="none"/></svg>
  <!-- zoom -->
  <svg class="ci" style="left:1099px;top:6px" width="14" height="14" viewBox="0 0 14 14"><circle cx="5.600" cy="5.600" r="4.500" fill="none" stroke="#5f6368" stroke-width="1.500"/><path d="M3.300 5.600h4.600M9 9l4.200 4.200" stroke="#5f6368" stroke-width="1.500" fill="none"/></svg>
  <!-- star -->
  <svg class="ci" style="left:1131px;top:6px" width="14" height="14" viewBox="0 0 14 14"><path fill="none" stroke="#5f6368" stroke-width="1.400" stroke-linejoin="miter" d="M7 1.400l1.750 3.900 4.200.4-3.200 2.800.95 4.100L7 10.450 3.300 12.600l.95-4.100L1.050 5.700l4.200-.4z"/></svg>
  <!-- camera -->
  <svg class="ci" style="left:1170.500px;top:6px" width="15" height="14" viewBox="0 0 16 14" preserveAspectRatio="none"><path fill="#9e9e9e" d="M5.200 1.200h5.600l1 1.800h2.700c.6 0 1.100.5 1.100 1.100v8.300c0 .6-.5 1.100-1.100 1.100h-13c-.6 0-1.100-.5-1.100-1.100V4.100c0-.6.500-1.100 1.100-1.100h2.700z"/><circle cx="8" cy="8.200" r="3.300" fill="#fff"/><circle cx="8" cy="8.200" r="2" fill="#9e9e9e"/></svg>
  <div id="cdiv"></div>
  <div id="avatar">N</div>
  <svg class="ci" style="left:1253px;top:5px" width="4" height="16" viewBox="0 0 4 16"><circle cx="2.200" cy="2.700" r="1.500" fill="#5f6368"/><circle cx="2.200" cy="8" r="1.500" fill="#5f6368"/><circle cx="2.200" cy="13.300" r="1.500" fill="#5f6368"/></svg>

</div>
<div id="nav"><div id="navin">
  <div id="sqr" class="sq"></div><div id="sqb" class="sq"></div><div id="sqy" class="sq"></div><div id="sqg" class="sq"></div>
  <div id="logo" class="abs"><span>vista</span>panel</div>
  <div class="nsep" style="left:1044px"></div>
  <div class="nsep" style="left:1175px"></div>
  <svg class="abs" style="left:1055px;top:17px" width="12" height="11" viewBox="0 0 12 11"><path fill="#fff" d="M6 0c1.7 0 2.7 1.2 2.7 2.9 0 1.300-.6 2.500-1.300 3.100v.7c1.600.5 4.100 1.300 4.400 2.500.1.400.2 1.100.2 1.800H0c0-.7.1-1.400.2-1.800.3-1.200 2.800-2 4.400-2.500v-.7C3.900 5.400 3.300 4.200 3.300 2.900 3.300 1.200 4.300 0 6 0z"/></svg>
  <div id="user" class="abs">EPIZ_2</div>
  <div id="redact3"></div>
  <div id="caret"></div>
  <svg class="abs" style="left:1187px;top:17px" width="13" height="10" viewBox="0 0 13 10"><path fill="none" stroke="#fff" stroke-width="2" d="M6.5 1H3.200A2.200 2.200 0 0 0 1 3.200v3.600A2.200 2.200 0 0 0 3.200 9H6.500"/><path fill="#fff" d="M4.500 3.700H8V1.200L12.600 5 8 8.800V6.300H4.500z"/></svg>
  <div id="logout" class="abs">LOG OUT</div>
</div></div>
</body>
</html>
